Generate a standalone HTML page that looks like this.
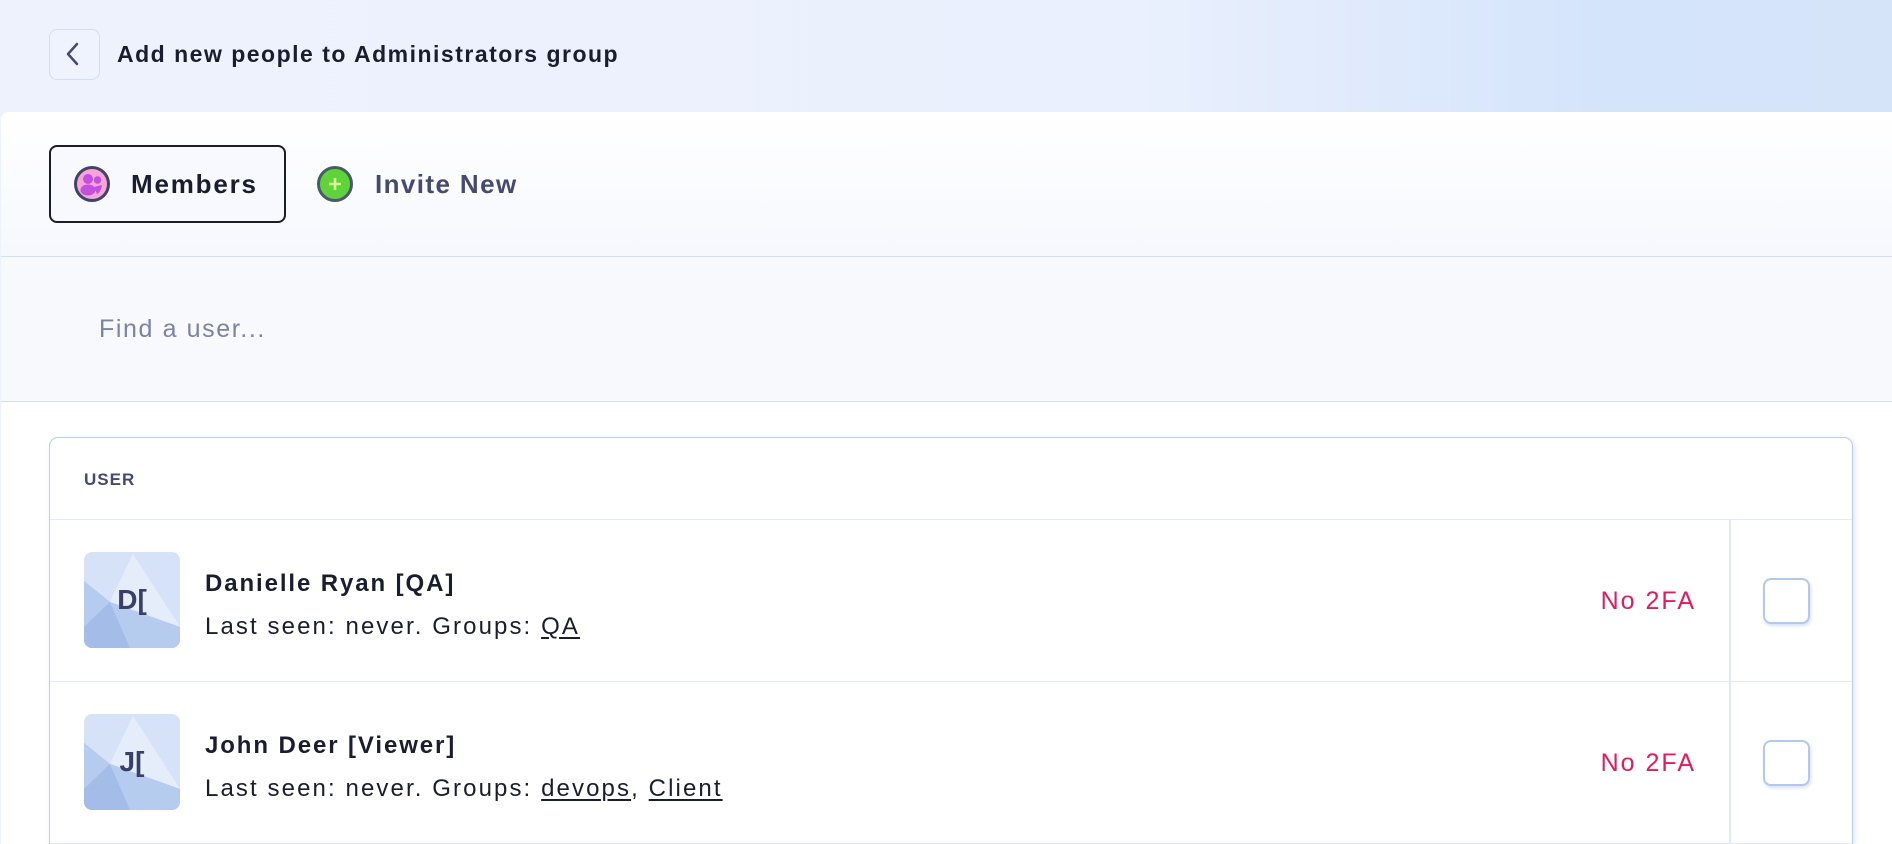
<!DOCTYPE html>
<html><head><meta charset="utf-8"><style>
*{box-sizing:border-box;margin:0;padding:0}
html{width:1892px;height:844px;overflow:hidden}
body{width:1892px;height:844px;overflow:hidden;font-family:"Liberation Sans",sans-serif;background:linear-gradient(90deg,#eef2fd 0%,#eaf0fd 60%,#d4e4fb 85%,#d6e4fa 100%);position:relative;color:#1a1d2e}
.back{position:absolute;left:49px;top:29px;width:51px;height:51px;border:1.5px solid #d3def4;border-radius:8px;background:#eff3fd}
.title{position:absolute;left:117px;top:41px;font-size:23px;font-weight:bold;color:#1a1d2e;letter-spacing:1.5px}
.card{position:absolute;left:1px;top:112px;width:1891px;height:732px;background:#fff;border-radius:8px 0 0 0;overflow:hidden}
.tabs{position:absolute;left:0;top:0;width:100%;height:145px;background:linear-gradient(180deg,#fff,#f6f8fe);border-bottom:1.5px solid #d3def4}
.tab{position:absolute;top:33px;height:78px;border-radius:8px;display:flex;align-items:center;font-size:26px;font-weight:bold}
.t1{left:48px;width:237px;border:2px solid #1a1d2e;background:#f8f9fe;letter-spacing:1.8px}
.t2{left:315px;color:#454a6e;letter-spacing:1.4px}
.search{position:absolute;left:0;top:145px;width:100%;height:145px;background:#f8f9fd;border-bottom:1.5px solid #d3def4}
.search span{position:absolute;left:98px;top:58px;font-size:25px;color:#7b82a2;letter-spacing:1.6px}
.table{position:absolute;left:48px;top:325px;width:1804px;height:407px;background:#fff;border:1.5px solid #b9cdef;border-bottom:none;border-radius:9px 9px 0 0;box-shadow:2px 2px 6px rgba(150,180,230,.3);overflow:hidden}
.hdr{height:82px;border-bottom:1.5px solid #e3eaf7;position:relative}
.hdr span{position:absolute;left:34px;top:32px;font-size:17px;font-weight:bold;color:#454a6e;letter-spacing:1px}
.row{height:162px;border-bottom:1.5px solid #e3eaf7;position:relative}
.av{position:absolute;left:34px;top:32px;width:96px;height:96px;border-radius:8px;overflow:hidden}
.av b{position:absolute;left:0;top:0;width:96px;height:96px;display:flex;align-items:center;justify-content:center;font-size:28px;color:#3a3f66}
.name{position:absolute;left:155px;top:50px;font-size:24px;font-weight:bold;letter-spacing:1.9px}
.sub{position:absolute;left:155px;top:93px;font-size:24px;letter-spacing:2.1px}
.sub u{text-underline-offset:3px}
.n2fa{position:absolute;right:156px;top:67px;font-size:25px;color:#e8185f;letter-spacing:2px}
.vd{position:absolute;left:1679px;top:0;width:1.5px;height:100%;background:#e3eaf7}
.cb{position:absolute;left:1713px;top:58px;width:47px;height:46px;border:2px solid #b3c8ec;border-radius:8px;background:#fff;box-shadow:1px 2px 3px rgba(150,180,230,.4)}
</style></head><body>
<div class="back"><svg width="48" height="48" viewBox="0 0 48 48"><path d="M27 14 L18 24 L27 34" fill="none" stroke="#454a6e" stroke-width="2.5" stroke-linecap="round" stroke-linejoin="round"/></svg></div>
<div class="title">Add new people to Administrators group</div>
<div class="card">
 <div class="tabs">
  <div class="tab t1"><svg style="margin-left:22px" width="38" height="38" viewBox="0 0 38 38"><circle cx="19" cy="19" r="16.5" fill="#f7a4d6" stroke="#3f4369" stroke-width="3"/><circle cx="15" cy="14" r="5" fill="#c24fe0"/><circle cx="24.5" cy="15" r="3.7" fill="#c24fe0"/><ellipse cx="15" cy="25" rx="7.5" ry="5.5" fill="#c24fe0"/><path d="M21 22 L29 20 Q28 27 24 29Z" fill="#c24fe0"/></svg><span style="margin-left:20px">Members</span></div>
  <div class="tab t2"><svg width="38" height="38" viewBox="0 0 38 38"><circle cx="19" cy="19" r="16.5" fill="#5fd43a" stroke="#4b5a6a" stroke-width="3"/><path d="M19 13v12M13 19h12" stroke="#d8ff9a" stroke-width="2.5"/></svg><span style="margin-left:21px">Invite New</span></div>
 </div>
 <div class="search"><span>Find a user...</span></div>
 <div class="table">
  <div class="hdr"><span>USER</span></div>
  <div class="row">
   <div class="av"><svg width="96" height="96" viewBox="0 0 100 100"><rect width="100" height="100" fill="#d6e2f7"/><polygon points="51,2 100,78 27,52" fill="#e6edfa"/><polygon points="0,30 27,52 100,78 100,100 0,100" fill="#b6ccee"/><polygon points="0,78 27,52 48,100 0,100" fill="#a4bde8"/></svg><b>D[</b></div>
   <div class="name">Danielle Ryan [QA]</div>
   <div class="sub">Last seen: never. Groups: <u>QA</u></div>
   <div class="n2fa">No 2FA</div><div class="vd"></div><div class="cb"></div>
  </div>
  <div class="row">
   <div class="av"><svg width="96" height="96" viewBox="0 0 100 100"><rect width="100" height="100" fill="#d6e2f7"/><polygon points="51,2 100,78 27,52" fill="#e6edfa"/><polygon points="0,30 27,52 100,78 100,100 0,100" fill="#b6ccee"/><polygon points="0,78 27,52 48,100 0,100" fill="#a4bde8"/></svg><b>J[</b></div>
   <div class="name">John Deer [Viewer]</div>
   <div class="sub">Last seen: never. Groups: <u>devops</u>, <u>Client</u></div>
   <div class="n2fa">No 2FA</div><div class="vd"></div><div class="cb"></div>
  </div>
 </div>
</div>
</body></html>
